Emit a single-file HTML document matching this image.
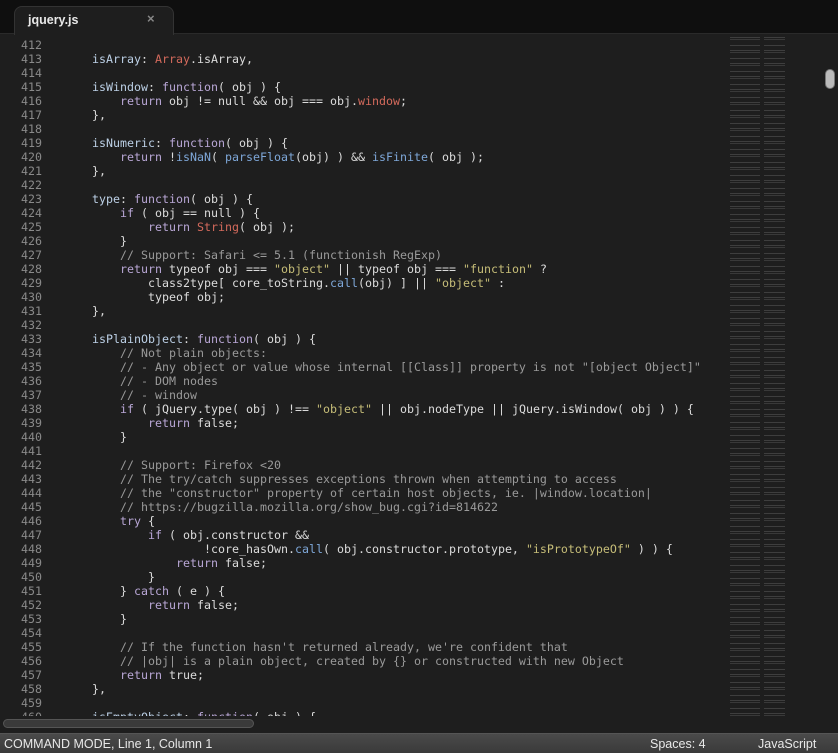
<!DOCTYPE html>
<html><head><meta charset="utf-8"><style>
*{margin:0;padding:0;box-sizing:border-box}
body{width:838px;height:753px;background:#1e1e1e;overflow:hidden;position:relative;font-family:"DejaVu Sans Mono","Liberation Mono",monospace}
#tabbar{position:absolute;left:0;top:0;width:838px;height:34px;background:#0f0f0f;border-bottom:1px solid #2a2a2a}
#tab{position:absolute;left:14px;top:6px;width:160px;height:29px;background:#1e1e1e;border-radius:8px 8px 0 0;border:1px solid #333;border-bottom:none}
#tab .t{position:absolute;left:13px;top:6px;font:bold 12.5px "Liberation Sans",sans-serif;color:#e8e8e8}
#tab .x{position:absolute;left:132px;top:4px;font:bold 13px "Liberation Sans",sans-serif;color:#888}
#code{position:absolute;left:0;top:38px;width:720px;height:678px;overflow:hidden;font-size:11.63px;line-height:14px;color:#dcdcdc}
.l{height:14px;white-space:pre}
.n{display:inline-block;width:42px;text-align:right;color:#8a8a8a;margin-right:22px}
.k{color:#b9a7d6}.s{color:#c6bd78}.c{color:#9a9a9a}.r{color:#d46a5c}.b{color:#7ea7d8}.p{color:#bcd0e6}
#mini{position:absolute;left:730px;top:36px;width:92px;height:680px;opacity:.3;background:repeating-linear-gradient(#1e1e1e 0 1px,#888 1px 2px,#1e1e1e 2px 3px,#777 3px 4px,#1e1e1e 4px 9px,#888 9px 10px,#1e1e1e 10px 13px);-webkit-mask:repeating-linear-gradient(90deg,#000 0 30px,transparent 30px 34px,#000 34px 55px,transparent 55px 92px)}
#vthumb{position:absolute;left:825px;top:69px;width:10px;height:20px;border-radius:5px;background:#bbb;border:1px solid #777}
#hs{position:absolute;left:0;top:716px;width:838px;height:17px;background:#1e1e1e}
#hthumb{position:absolute;left:3px;top:719px;width:251px;height:9px;border-radius:5px;background:#3a3a3a;border:1px solid #555}
#status{position:absolute;left:0;top:733px;width:838px;height:20px;background:linear-gradient(#4a4a4a,#3a3a3a);border-top:1px solid #555;font:12.5px "Liberation Sans",sans-serif;color:#e8e8e8}
#status span{position:absolute;top:3px}
</style></head><body>
<div id="tabbar"><div id="tab"><span class="t">jquery.js</span><span class="x">×</span></div></div>
<div id="code"><div class="l"><span class="n">412</span></div><div class="l"><span class="n">413</span>    <span class="p">isArray</span>: <span class="r">Array</span>.isArray,</div><div class="l"><span class="n">414</span></div><div class="l"><span class="n">415</span>    <span class="p">isWindow</span>: <span class="k">function</span>( obj ) {</div><div class="l"><span class="n">416</span>        <span class="k">return</span> obj != null &amp;&amp; obj === obj.<span class="r">window</span>;</div><div class="l"><span class="n">417</span>    },</div><div class="l"><span class="n">418</span></div><div class="l"><span class="n">419</span>    <span class="p">isNumeric</span>: <span class="k">function</span>( obj ) {</div><div class="l"><span class="n">420</span>        <span class="k">return</span> !<span class="b">isNaN</span>( <span class="b">parseFloat</span>(obj) ) &amp;&amp; <span class="b">isFinite</span>( obj );</div><div class="l"><span class="n">421</span>    },</div><div class="l"><span class="n">422</span></div><div class="l"><span class="n">423</span>    <span class="p">type</span>: <span class="k">function</span>( obj ) {</div><div class="l"><span class="n">424</span>        <span class="k">if</span> ( obj == null ) {</div><div class="l"><span class="n">425</span>            <span class="k">return</span> <span class="r">String</span>( obj );</div><div class="l"><span class="n">426</span>        }</div><div class="l"><span class="n">427</span>        <span class="c">// Support: Safari &lt;= 5.1 (functionish RegExp)</span></div><div class="l"><span class="n">428</span>        <span class="k">return</span> typeof obj === <span class="s">"object"</span> || typeof obj === <span class="s">"function"</span> ?</div><div class="l"><span class="n">429</span>            class2type[ core_toString.<span class="b">call</span>(obj) ] || <span class="s">"object"</span> :</div><div class="l"><span class="n">430</span>            typeof obj;</div><div class="l"><span class="n">431</span>    },</div><div class="l"><span class="n">432</span></div><div class="l"><span class="n">433</span>    <span class="p">isPlainObject</span>: <span class="k">function</span>( obj ) {</div><div class="l"><span class="n">434</span>        <span class="c">// Not plain objects:</span></div><div class="l"><span class="n">435</span>        <span class="c">// - Any object or value whose internal [[Class]] property is not "[object Object]"</span></div><div class="l"><span class="n">436</span>        <span class="c">// - DOM nodes</span></div><div class="l"><span class="n">437</span>        <span class="c">// - window</span></div><div class="l"><span class="n">438</span>        <span class="k">if</span> ( jQuery.type( obj ) !== <span class="s">"object"</span> || obj.nodeType || jQuery.isWindow( obj ) ) {</div><div class="l"><span class="n">439</span>            <span class="k">return</span> false;</div><div class="l"><span class="n">440</span>        }</div><div class="l"><span class="n">441</span></div><div class="l"><span class="n">442</span>        <span class="c">// Support: Firefox &lt;20</span></div><div class="l"><span class="n">443</span>        <span class="c">// The try/catch suppresses exceptions thrown when attempting to access</span></div><div class="l"><span class="n">444</span>        <span class="c">// the "constructor" property of certain host objects, ie. |window.location|</span></div><div class="l"><span class="n">445</span>        <span class="c">// https://bugzilla.mozilla.org/show_bug.cgi?id=814622</span></div><div class="l"><span class="n">446</span>        <span class="k">try</span> {</div><div class="l"><span class="n">447</span>            <span class="k">if</span> ( obj.constructor &amp;&amp;</div><div class="l"><span class="n">448</span>                    !core_hasOwn.<span class="b">call</span>( obj.constructor.prototype, <span class="s">"isPrototypeOf"</span> ) ) {</div><div class="l"><span class="n">449</span>                <span class="k">return</span> false;</div><div class="l"><span class="n">450</span>            }</div><div class="l"><span class="n">451</span>        } <span class="k">catch</span> ( e ) {</div><div class="l"><span class="n">452</span>            <span class="k">return</span> false;</div><div class="l"><span class="n">453</span>        }</div><div class="l"><span class="n">454</span></div><div class="l"><span class="n">455</span>        <span class="c">// If the function hasn't returned already, we're confident that</span></div><div class="l"><span class="n">456</span>        <span class="c">// |obj| is a plain object, created by {} or constructed with new Object</span></div><div class="l"><span class="n">457</span>        <span class="k">return</span> true;</div><div class="l"><span class="n">458</span>    },</div><div class="l"><span class="n">459</span></div><div class="l"><span class="n">460</span>    <span class="p">isEmptyObject</span>: <span class="k">function</span>( obj ) {</div></div>
<div id="mini"></div>
<div id="vthumb"></div>
<div id="hs"></div>
<div id="hthumb"></div>
<div id="status"><span style="left:4px">COMMAND MODE, Line 1, Column 1</span><span style="left:650px">Spaces: 4</span><span style="left:758px">JavaScript</span></div>
</body></html>
